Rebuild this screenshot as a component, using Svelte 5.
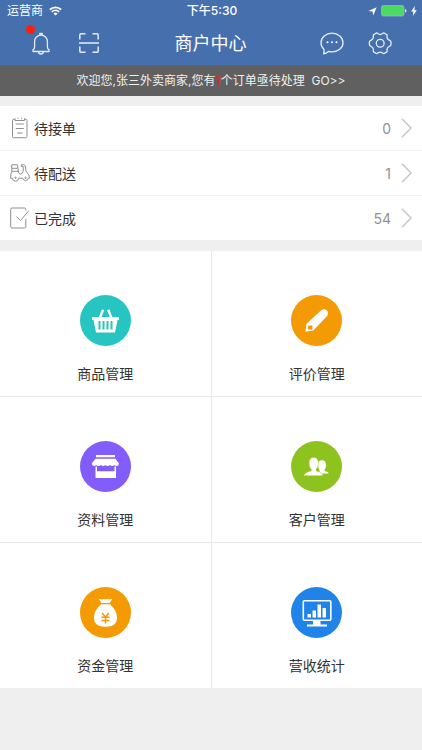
<script>
  const orders = [
    { key: 'waiting', label: '待接单', count: 0 },
    { key: 'delivery', label: '待配送', count: 1 },
    { key: 'done', label: '已完成', count: 54 }
  ];

  const menus = [
    { key: 'goods', label: '商品管理', color: '#27c5c1' },
    { key: 'review', label: '评价管理', color: '#f39a05' },
    { key: 'profile', label: '资料管理', color: '#825dfb' },
    { key: 'customer', label: '客户管理', color: '#8ec31f' },
    { key: 'money', label: '资金管理', color: '#f39a05' },
    { key: 'stats', label: '营收统计', color: '#2083ea' }
  ];

  const pending = 1;
</script>

<header>
  <div class="status">
    <div class="carrier">
      <span>运营商</span>
      <svg width="13" height="10" viewBox="0 0 13 10" fill="none" stroke="#fff" stroke-width="1.7">
        <path d="M.8 3.6a8.2 8.2 0 0 1 11.4 0M2.8 5.8a5.2 5.2 0 0 1 7.4 0" />
        <path d="M6.5 9.6L4.4 7.5a3 3 0 0 1 4.2 0z" fill="#fff" stroke="none" />
      </svg>
    </div>
    <time>下午5:30</time>
    <div class="power">
      <svg width="9" height="9" viewBox="0 0 9 9"><path d="M8.7.3L5.2 8.6 4.6 4.5.4 3.9z" fill="#fff" /></svg>
      <svg width="26" height="12" viewBox="0 0 26 12">
        <rect x=".5" y=".5" width="22.5" height="10.5" rx="1.8" fill="#4cd964" stroke="#9db9d9" stroke-width=".7" />
        <path d="M24 4q1.5.3 1.5 1.8T24 7.6z" fill="#dce6f2" />
      </svg>
      <svg width="6" height="10" viewBox="0 0 6 10"><path d="M3.8 0L.2 5.4h2.2L1.8 10l4-5.800H3.400z" fill="#fff" /></svg>
    </div>
  </div>
  <nav>
    <div class="tools">
      <button class="bell" aria-label="消息提醒">
        <svg width="24" height="24" viewBox="0 0 24 24">
          <path d="M4 19.500v-1.700q1.600-.8 1.600-3V9.500a6.400 6.400 0 0 1 12.800 0v5.300q0 2.200 1.600 3v1.700zM10.800 3.200V1.500h2.400v1.700M9.500 19.500a2.500 2.500 0 0 0 5 0" />
        </svg>
        <span class="dot"></span>
      </button>
      <button aria-label="扫一扫">
        <svg width="24" height="24" viewBox="0 0 24 24">
          <path stroke-width="1.500" d="M2.800 7.500V3q0-1.200 1.200-1.200h4.500M15.500 1.800H20q1.200 0 1.200 1.200v4.500M2.800 14.500V19q0 1.200 1.200 1.200h4.500M15.500 20.200H20q1.200 0 1.200-1.200v-4.500M2 11h20" />
        </svg>
      </button>
    </div>
    <h1>商户中心</h1>
    <div class="tools right">
      <button aria-label="客服">
        <svg width="24" height="24" viewBox="0 0 24 24">
          <path d="M3.900 17.200C2 15.500 1 13.200 1 10.700 1 5.300 5.900 1.200 12 1.200S23 5.300 23 10.700 18.100 19.800 12 19.800c-1.300 0-2.500-.2-3.600-.5Q6.500 21.500 3.600 21.800 4.600 19.800 3.900 17.200z" />
          <g fill="#fff" stroke="none"><circle cx="7.500" cy="10.300" r="1" /><circle cx="12" cy="10.300" r="1" /><circle cx="16.500" cy="10.300" r="1" /></g>
        </svg>
      </button>
      <button aria-label="设置">
        <svg width="24" height="24" viewBox="0 0 24 24">
          <path d="M8.700 .9C9.700 .9 10.200 2.500 12.200 2.500S14.700 .9 15.700 .9L18.900 2.700C19.500 3.600 18.500 4.900 19.500 6.600S22.200 8.300 22.700 9.200Q23.500 11.300 22.700 13.400C22.200 14.300 20.500 14.300 19.500 16S19.500 19 18.900 19.900L15.700 21.700C14.700 21.700 14.200 20.100 12.200 20.100S9.700 21.700 8.700 21.700L5.500 19.900C4.900 19 5.900 17.700 4.900 16S2.200 14.300 1.700 13.400Q.9 11.300 1.700 9.200C2.200 8.300 3.900 8.300 4.900 6.600S4.900 3.600 5.500 2.700z" />
          <circle cx="12.200" cy="11.300" r="3.900" />
        </svg>
      </button>
    </div>
  </nav>
</header>

<a class="notice" href="#pending">
  欢迎您,张三外卖商家,您有<em>{pending}</em>个订单亟待处理&nbsp; GO&gt;&gt;
</a>

<main>
  <ul class="orders">
    {#each orders as order (order.key)}
      <li>
        <a href={`#${order.key}`}>
          <svg class="order-icon" width="20" height="22" viewBox="0 0 20 22">
            {#if order.key === 'waiting'}
              <path d="M5 2.300H3.700Q2.500 2.300 2.500 3.500V19.500q0 1.200 1.200 1.200h12.100q1.200 0 1.200-1.200V3.500q0-1.200-1.200-1.200H14.500M5 1.300v2.200h9.500V1.300M7.500 1.300h1M11 1.300h1M5.800 7h8M5.800 11.500h8M7 16h5.600" />
            {:else if order.key === 'delivery'}
              <path d="M1.700 2.800h6v3.500h-6zM2 6.300l-.5 3h6.800L8 6.300M2.300 9.300Q.2 11.500.6 16.200h1.900a3 3 0 0 0 6 0h4.200a3 3 0 0 0 5.800 0h1q-.2-5-3.400-6.500l-.8-5.600q-.3-1.300-1.700-1.300h-2.400v1.600h1.900q.9 3.600-.7 6.700-3.600 2.700-4-2.100" />
              <circle cx="5.500" cy="15.800" r=".7" /><circle cx="15.600" cy="15.800" r=".7" />
            {:else}
              <path d="M15.800 3.500V2.300Q15.800 1 14.500 1H2Q.7 1 .7 2.300v17.400Q.7 21 2 21h12.500q1.300 0 1.300-1.300V12M6.500 9.500l4 4L18.700 4" />
            {/if}
          </svg>
          <span class="name">{order.label}</span>
          <span class="count">{order.count}</span>
          <svg class="arrow" width="11" height="20" viewBox="0 0 11 20"><path d="M1 .7l9 9.300-9 9.300" /></svg>
        </a>
      </li>
    {/each}
  </ul>

  <div class="menu">
    {#each menus as menu (menu.key)}
      <a href={`#${menu.key}`}>
        <span class="circle" style:background={menu.color}>
          <svg width="51" height="51" viewBox="0 0 51 51" fill="#fff">
            {#if menu.key === 'goods'}
              <path d="M22 14.200l2.300 1-3 7h-2.500zM29.300 14.200l-2.300 1 3 7h2.500z" />
              <path fill-rule="evenodd" d="M12 22h27v3h-1.500l-2.500 12.500H16L13.500 25H12zM18.500 26v8.500h2V26zM22.500 26v8.500h2V26zM26.500 26v8.500h2V26zM30.500 26v8.500h2V26z" />
            {:else if menu.key === 'review'}
              <path fill-rule="evenodd" d="M14.300 36.700l1.300-8L30.200 15.300q3.200-2.300 5.500 0t.4 5.800L22.300 35.500zM17.200 30.600l-.4 4 4.500-.2.200-4z" />
            {:else if menu.key === 'profile'}
              <path d="M16 14h19v2.300H16zM15.500 17.700h20L39 22.500q-.3 2.500-2.300 2.500-1.400 0-2.100-1-.9 1-2.300 1t-2.300-1q-.9 1-2.300 1t-2.300-1q-.9 1-2.300 1t-2.300-1q-.9 1-2.300 1t-2.300-1q-.9 1-2 1-2-.2-2.500-2.500z" />
              <path fill-rule="evenodd" d="M15.500 25.500H17v4.700h17.500v-4.700H36V37H15.500z" />
            {:else if menu.key === 'customer'}
              <path d="M28.500 31.700V29q-1.500-1.600-1.500-5 0-4.800 4-4.800t4 4.800q0 3-1.500 4.700v1.400q3.600.8 4.500 2.400h-9.500z" />
              <path d="M12.800 34.700q.4-3.200 7.400-4.700v-1.800q-2.200-2-2.200-6 0-5.700 4.700-5.700t4.700 5.700q0 4-2.200 6V30q6.700 1.500 6.900 4.700z" stroke="#8ec31f" stroke-width=".4" />
            {:else if menu.key === 'money'}
              <path d="M18.800 12.300q1.500-.8 3 .2 1.500-1 3.700-.3 2.100-.8 3.700.3 1.500-1 3-.2-1.600 1.900-2.400 3.700h-8.600q-.8-1.900-2.400-3.700zM21 17.300h9q7 6 7 13.500 0 9-11.500 9T14 30.800q0-7.500 7-13.500z" />
              <path d="M22.200 26l3.300 4.300 3.300-4.300M25.500 30v6.500M21.500 30.300h8M21.500 33.500h8" fill="none" stroke="#f39a05" stroke-width="1.500" />
            {:else}
              <rect x="12.300" y="13.700" width="27.500" height="19.500" rx="1" fill="none" stroke="#fff" stroke-width="1.600" />
              <path d="M16.500 27H20v3.500h-3.500zM21.500 23.500H25v7h-3.500zM26.500 17.500H30v13h-3.500zM31.500 21H35v9.500h-3.500zM22 34h7.500v3.500h6.500v2H16v-2h6z" />
            {/if}
          </svg>
        </span>
        <span class="label">{menu.label}</span>
      </a>
    {/each}
  </div>
</main>

<style>
  :global(body) {
    background: #efefef;
    color: #333;
    font-family: Inter, "Noto Sans CJK SC", sans-serif;
    font-size: 14px;
  }

  a {
    color: inherit;
    text-decoration: none;
  }

  svg {
    display: block;
    flex: none;
  }

  header {
    background: #466fae;
    color: #fff;
  }

  .status,
  nav {
    display: grid;
    grid-template-columns: 1fr auto 1fr;
    align-items: center;
  }

  .status {
    height: 22px;
    padding: 0 5px 0 7px;
    font-size: 12px;
    line-height: 22px;
  }

  .status time {
    font-weight: 500;
  }

  .carrier,
  .power {
    display: flex;
    align-items: center;
    gap: 6px;
  }

  .power {
    justify-content: flex-end;
    gap: 4px;
  }

  nav {
    height: 43px;
    padding: 0 30px 0 29px;
  }

  h1 {
    margin: 0;
    font-size: 18px;
    font-weight: 400;
    line-height: 24px;
  }

  .tools {
    display: flex;
    gap: 24px;
  }

  .right {
    justify-content: flex-end;
  }

  button {
    position: relative;
    padding: 0;
    border: 0;
    background: none;
    cursor: pointer;
  }

  button svg {
    fill: none;
    stroke: #e4edfa;
    stroke-width: 1.3;
    stroke-linejoin: round;
  }

  .dot {
    position: absolute;
    top: -7px;
    left: -3px;
    width: 9px;
    height: 9px;
    border-radius: 50%;
    background: #fa200c;
  }

  .notice {
    display: block;
    background: #606060;
    color: #f0f0f0;
    font-size: 12px;
    line-height: 31px;
    text-align: center;
  }

  .notice em {
    color: #e02b2b;
    font-style: normal;
    font-weight: 700;
  }

  .orders {
    margin: 10px 0 11px;
    padding: 0;
    background: #fff;
    list-style: none;
  }

  .orders li + li {
    border-top: 1px solid #f2f2f2;
  }

  .orders a {
    display: flex;
    align-items: center;
    height: 44px;
    padding: 0 10px;
  }

  .order-icon {
    fill: none;
    stroke: #8f8f8f;
    stroke-width: 1;
  }

  .name {
    flex: 1;
    margin-left: 4px;
  }

  .count {
    margin-right: 10px;
    color: #929292;
  }

  .arrow {
    fill: none;
    stroke: #c4c4c4;
    stroke-width: 1.4;
  }

  .menu {
    display: grid;
    grid-template-columns: 1fr 1fr;
    gap: 1px;
    background: #e9e9e9;
  }

  .menu a {
    display: flex;
    flex-direction: column;
    align-items: center;
    gap: 17px;
    padding: 44px 0 12px;
    background: #fff;
  }

  .circle {
    border-radius: 50%;
  }

  .label {
    line-height: 21px;
  }
</style>
